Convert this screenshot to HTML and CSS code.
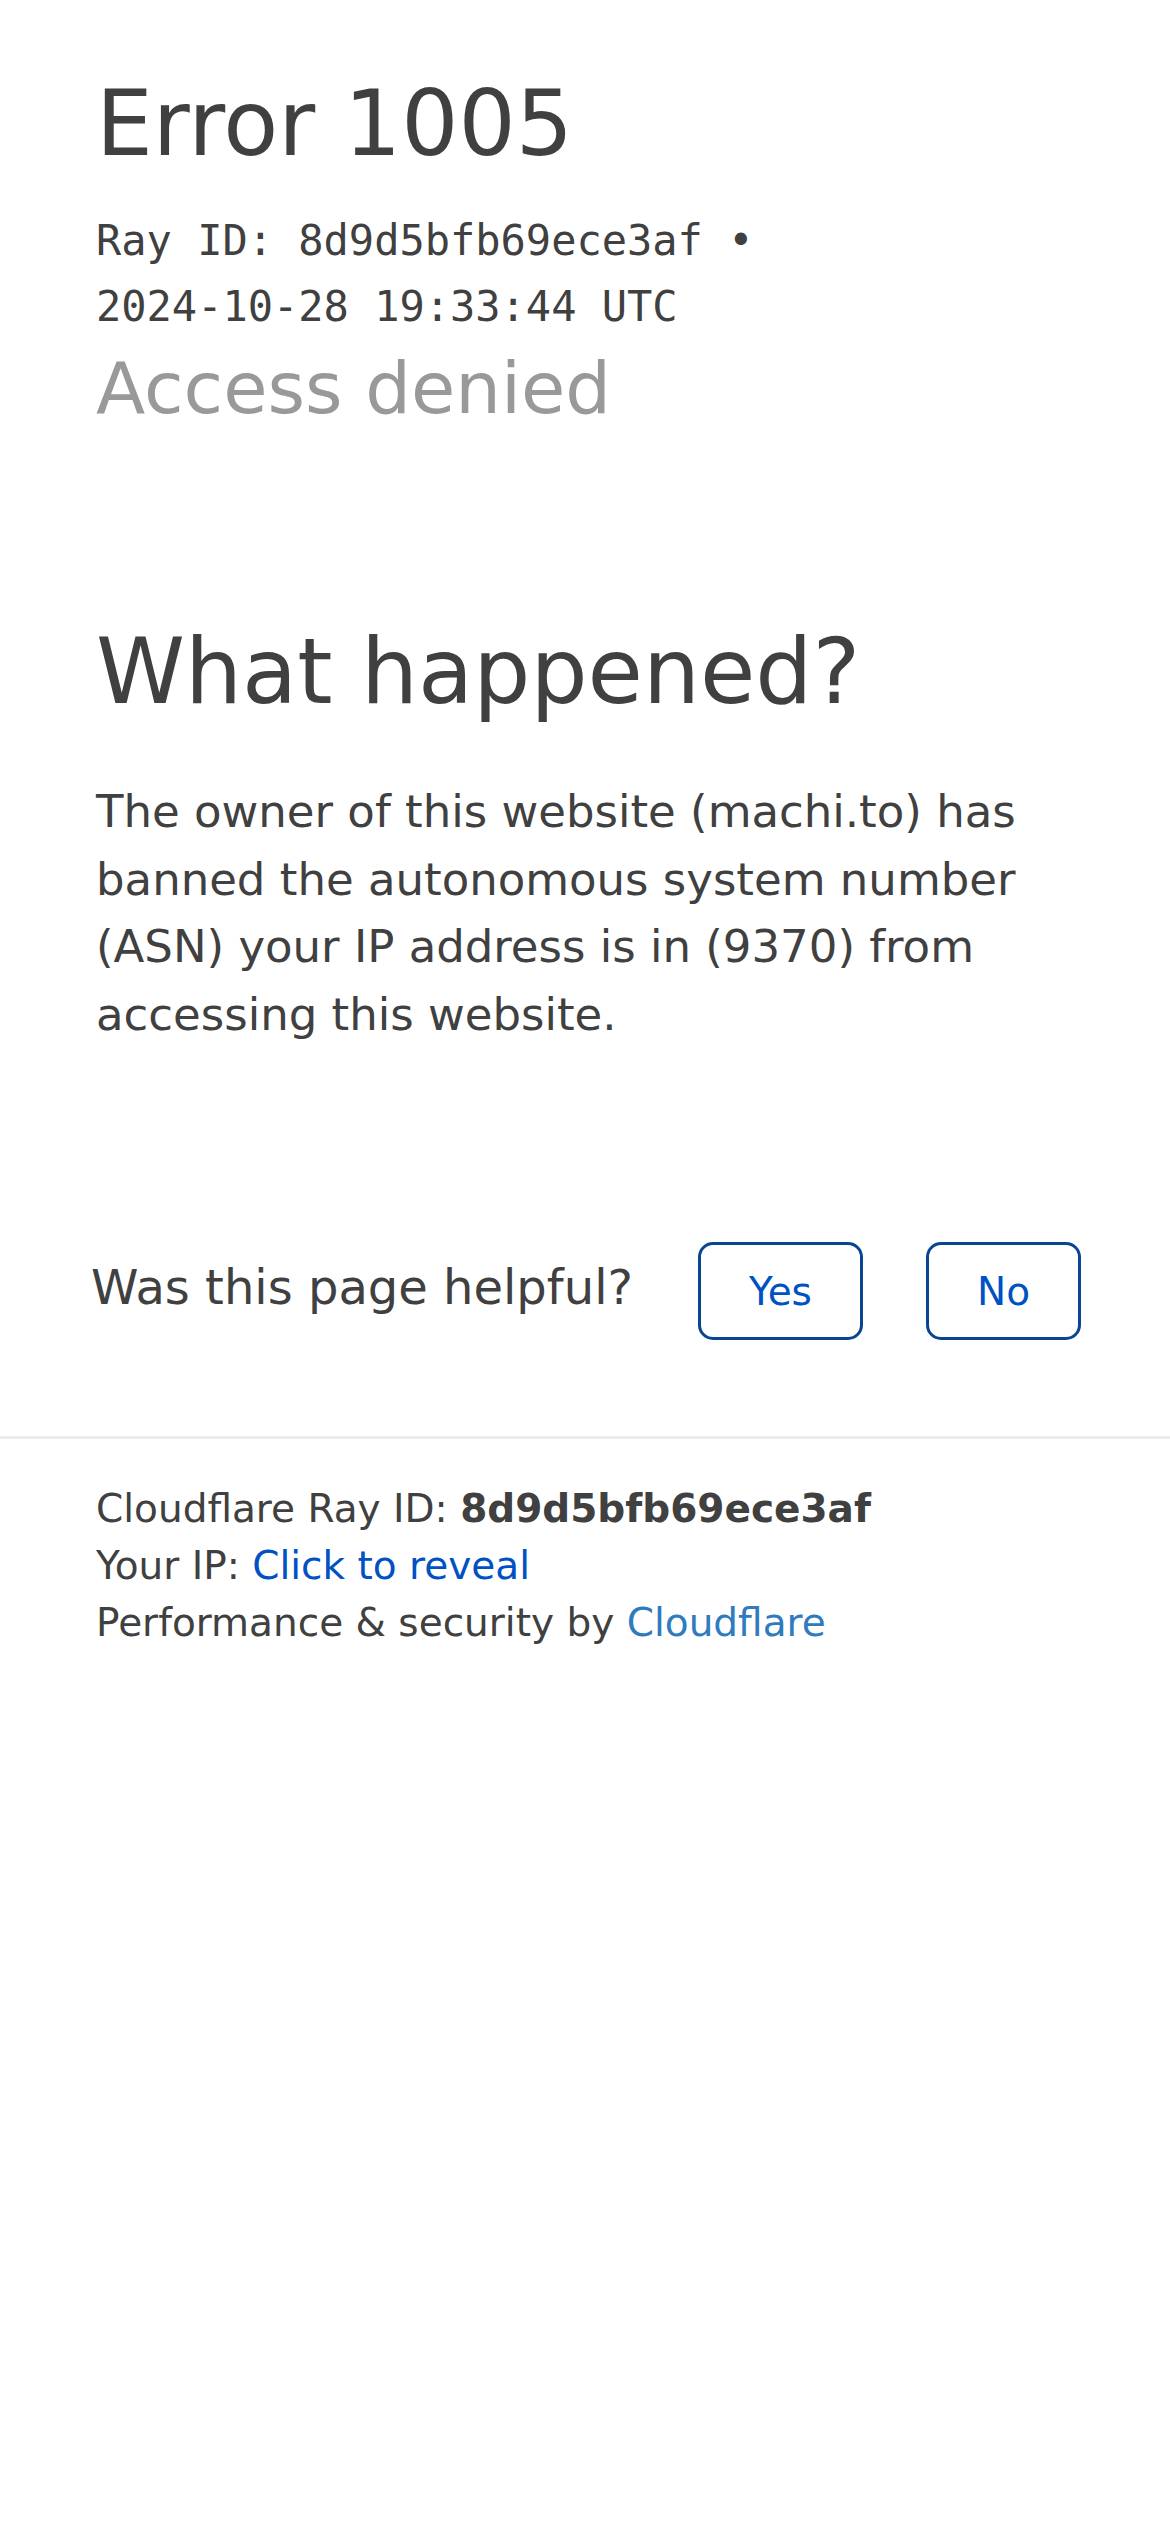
FILE: index.html
```html
<!DOCTYPE html>
<html lang="en">
<head>
  <meta charset="UTF-8">
  <meta name="viewport" content="width=device-width, initial-scale=1.0">
  <title>Access denied | machi.to used Cloudflare to restrict access</title>
  <link rel="stylesheet" href="styles.css">
</head>
<body>
  <div class="main-wrapper">
    <div class="error-header">
      <h1 class="error-code">Error 1005</h1>
      <div class="ray-id">Ray ID: 8d9d5bfb69ece3af &bull;<br>2024-10-28 19:33:44 UTC</div>
      <h2 class="error-title">Access denied</h2>
    </div>

    <div class="error-section">
      <h2 class="section-title">What happened?</h2>
      <p class="section-text">The owner of this website (machi.to) has banned the autonomous system number (ASN) your IP address is in (9370) from accessing this website.</p>
    </div>
  </div>

  <div class="feedback">
    <span class="feedback-question">Was this page helpful?</span>
    <div class="feedback-buttons">
      <button class="feedback-btn" id="feedback-yes">Yes</button>
      <button class="feedback-btn" id="feedback-no">No</button>
    </div>
  </div>

  <div class="footer">
    <p>Cloudflare Ray ID: <strong>8d9d5bfb69ece3af</strong></p>
    <p>Your IP: <a href="#" class="reveal-link" id="reveal-ip">Click to reveal</a></p>
    <p>Performance &amp; security by <a href="#" class="cf-link">Cloudflare</a></p>
  </div>

  <script>
    // Show the visitor IP when the link is clicked
    const revealLink = document.getElementById("reveal-ip");
    revealLink.addEventListener("click", (e) => {
      e.preventDefault();
      revealLink.textContent = "127.0.0.1";
    });
  </script>
</body>
</html>
```

FILE: styles.css
```css
/* General Styling */
body {
  font-family: "DejaVu Sans", "Liberation Sans", sans-serif;
  margin: 0;
  padding: 0;
  background-color: #fff;
  color: #404040;
}

.main-wrapper {
  padding: 0 96px;
}

.error-code {
  margin: 70px 0 0;
  font-size: 90px;
  font-weight: normal;
  line-height: 108px;
}

.ray-id {
  margin-top: 30px;
  font-family: "DejaVu Sans Mono", "Liberation Mono", monospace;
  font-size: 42px;
  line-height: 66px;
}

.error-title {
  margin: 5px 0 0;
  font-size: 72px;
  font-weight: normal;
  line-height: 86px;
  color: #999;
}

.section-title {
  margin: 191px 0 0;
  font-size: 90px;
  font-weight: normal;
  line-height: 100px;
}

.section-text {
  margin: 56px 0 0;
  font-size: 45px;
  line-height: 67.5px;
}

/* Feedback row */
.feedback {
  display: flex;
  justify-content: space-between;
  align-items: center;
  margin-top: 194px;
  padding: 0 89px 96px 91px;
  border-bottom: 3px solid #ebebeb;
}

.feedback-question {
  font-size: 48px;
  line-height: 72px;
  margin-bottom: 8px;
}

.feedback-buttons {
  display: flex;
  gap: 63px;
}

.feedback-btn {
  height: 98px;
  min-width: 155px;
  padding: 0 48px;
  background-color: #fff;
  border: 3px solid #0a4593;
  border-radius: 15px;
  color: #0051c3;
  font-family: "DejaVu Sans", "Liberation Sans", sans-serif;
  font-size: 39px;
  cursor: pointer;
}

/* Footer */
.footer {
  padding: 41px 96px 0;
  font-size: 39px;
  line-height: 57px;
}

.footer p {
  margin: 0;
}

.reveal-link {
  color: #0051c3;
  text-decoration: none;
}

.cf-link {
  color: #2f7bbd;
  text-decoration: none;
}
```
